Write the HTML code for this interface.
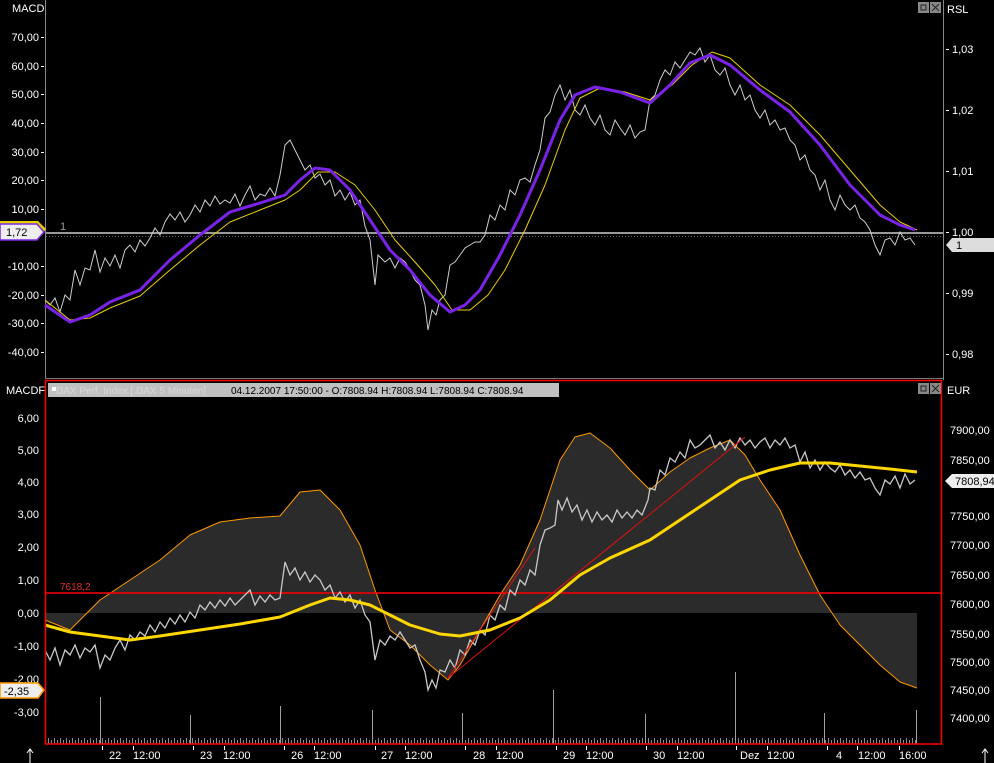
<!DOCTYPE html>
<html><head><meta charset="utf-8"><style>
html,body{margin:0;padding:0;background:#000;width:994px;height:763px;overflow:hidden}
svg{display:block}
text{font-family:"Liberation Sans",sans-serif;font-size:11px;fill:#fff}
</style></head><body>
<svg width="994" height="763" viewBox="0 0 994 763" xmlns="http://www.w3.org/2000/svg">
<defs>
<pattern id="vol" x="45" y="0" width="6" height="763" patternUnits="userSpaceOnUse">
<rect x="0" y="740" width="1" height="4" fill="#8a8a8a"/>
<rect x="3" y="738" width="1" height="6" fill="#8a8a8a"/>
</pattern>
</defs>
<line x1="45.5" y1="0" x2="45.5" y2="378" stroke="#888"/>
<line x1="943.5" y1="0" x2="943.5" y2="380" stroke="#888"/>
<line x1="45" y1="378.5" x2="943" y2="378.5" stroke="#777"/>
<text x="12" y="12">MACD</text>
<text x="947" y="13">RSL</text>
<rect x="918" y="2" width="11" height="11" fill="#888"/><rect x="921" y="5" width="5" height="5" fill="none" stroke="#222"/>
<rect x="930" y="2" width="11" height="11" fill="#888"/><path d="M932 4l7 7M939 4l-7 7" stroke="#222"/>
<g text-anchor="end">
<text x="39" y="41">70,00</text><text x="39" y="70">60,00</text><text x="39" y="98">50,00</text>
<text x="39" y="127">40,00</text><text x="39" y="156">30,00</text><text x="39" y="184">20,00</text>
<text x="39" y="213">10,00</text><text x="39" y="270">-10,00</text>
<text x="39" y="299">-20,00</text><text x="39" y="327">-30,00</text><text x="39" y="356">-40,00</text>
</g>
<g fill="#fff">
<rect x="41" y="37" width="3" height="1"/><rect x="41" y="66" width="3" height="1"/><rect x="41" y="94" width="3" height="1"/><rect x="41" y="123" width="3" height="1"/><rect x="41" y="152" width="3" height="1"/><rect x="41" y="180" width="3" height="1"/><rect x="41" y="209" width="3" height="1"/><rect x="41" y="266" width="3" height="1"/><rect x="41" y="295" width="3" height="1"/><rect x="41" y="323" width="3" height="1"/><rect x="41" y="352" width="3" height="1"/>
</g>
<g>
<text x="952" y="53">1,03</text><text x="952" y="114">1,02</text><text x="952" y="175">1,01</text>
<text x="952" y="236">1,00</text><text x="952" y="297">0,99</text><text x="952" y="358">0,98</text>
</g>
<g fill="#fff"><rect x="946" y="49" width="3" height="1"/><rect x="946" y="110" width="3" height="1"/><rect x="946" y="171" width="3" height="1"/><rect x="946" y="232" width="3" height="1"/><rect x="946" y="293" width="3" height="1"/><rect x="946" y="354" width="3" height="1"/></g>
<line x1="46" y1="233" x2="943" y2="233" stroke="#999" stroke-width="2"/>
<line x1="46" y1="236.5" x2="943" y2="236.5" stroke="#666" stroke-dasharray="1 2"/>
<text x="60" y="230" style="fill:#999">1</text>
<polyline fill="none" stroke="#ccc" stroke-width="1" points="45,300 50,305 55,298 60,312 65,295 70,300 75,270 80,285 85,268 90,270 95,250 100,272 105,258 110,266 115,255 120,268 125,250 130,245 135,252 140,240 145,246 150,238 155,228 160,235 165,222 170,214 175,220 180,212 185,222 190,215 195,205 200,212 205,200 210,206 215,196 220,204 225,200 230,203 235,194 240,206 245,195 250,186 255,200 260,194 265,196 270,188 275,196 280,175 285,145 290,140 295,150 300,160 305,170 310,165 315,178 320,174 325,185 330,180 335,196 340,190 345,200 350,192 355,205 360,200 365,226 370,240 375,285 378,255 385,262 390,258 395,268 400,258 405,262 410,270 415,280 420,285 425,305 428,330 432,310 436,315 440,300 445,295 450,265 455,262 460,255 465,248 470,245 475,242 480,242 485,235 490,215 495,220 500,205 505,210 510,190 515,195 520,180 525,178 530,182 535,165 540,150 545,118 550,112 555,95 560,85 565,100 570,90 575,110 580,115 585,105 590,118 595,125 600,115 605,130 610,135 615,120 620,128 625,135 630,125 635,138 640,132 645,130 650,100 655,95 660,80 665,70 670,75 675,62 680,68 685,60 690,52 695,55 700,48 705,62 710,55 715,70 720,75 725,68 730,85 735,95 740,85 745,100 750,95 755,110 760,118 765,110 770,125 775,120 780,130 785,128 790,140 795,145 800,160 805,155 810,170 815,175 820,190 825,180 830,200 835,210 840,195 845,205 850,210 855,205 860,218 865,222 870,230 875,245 880,255 885,240 890,238 895,245 900,232 905,240 910,238 915,245"/>
<polyline fill="none" stroke="#e8d000" stroke-width="1" stroke-linejoin="round" points="45,300 70,320 90,318 110,308 140,296 170,270 200,245 230,222 260,210 285,200 300,190 318,172 335,172 355,185 375,210 395,240 415,262 435,285 452,310 470,310 488,295 505,270 525,230 545,185 565,130 580,98 600,88 625,92 650,100 672,85 692,65 712,52 730,58 760,85 790,105 820,135 850,170 880,205 900,222 917,230"/>
<polyline fill="none" stroke="#7a22e8" stroke-width="3" stroke-linejoin="round" points="45,305 70,322 90,315 110,302 140,290 170,260 200,235 230,212 260,203 285,195 300,180 315,168 330,170 350,190 370,220 390,250 410,270 430,295 450,312 465,305 480,290 500,255 520,215 540,170 560,120 575,95 595,87 620,92 650,103 670,85 690,63 710,55 730,65 760,90 790,112 820,145 850,185 880,215 900,225 915,230"/>
<path d="M0,221 H38 L46,229 L38,240 H0Z" fill="#e8d000"/>
<path d="M0,224 H37 L44,232 L37,240 H0Z" fill="#eee" stroke="#7a2be2" stroke-width="1.5"/>
<text x="6" y="236" style="fill:#000">1,72</text>
<path d="M946,245 L952,238 H994 V252 H952Z" fill="#ddd"/>
<text x="956" y="249" style="fill:#000">1</text>

<polygon fill="#2b2b2b" points="45,613 45,620 70,630 100,600 130,580 160,560 190,535 220,522 250,518 280,516 300,492 320,490 340,510 360,545 375,590 390,630 410,645 430,665 448,680 460,665 480,630 500,595 520,565 540,520 560,460 575,437 590,433 610,448 630,470 650,490 670,472 690,458 710,448 730,440 745,455 760,480 780,510 800,555 820,595 840,625 860,645 880,665 900,682 917,688 917,613"/>
<polyline fill="none" stroke="#ff9900" stroke-width="1" stroke-linejoin="round" points="45,620 70,630 100,600 130,580 160,560 190,535 220,522 250,518 280,516 300,492 320,490 340,510 360,545 375,590 390,630 410,645 430,665 448,680 460,665 480,630 500,595 520,565 540,520 560,460 575,437 590,433 610,448 630,470 650,490 670,472 690,458 710,448 730,440 745,455 760,480 780,510 800,555 820,595 840,625 860,645 880,665 900,682 917,688"/>
<line x1="46" y1="593" x2="942" y2="593" stroke="#ff0000" stroke-width="1.5"/>
<text x="60" y="590" style="fill:#e03030;font-size:10px">7618,2</text>
<polyline fill="none" stroke="#c8c8c8" stroke-width="1.3" points="45,650 50,660 55,648 60,665 65,650 70,655 75,645 80,658 85,648 90,652 95,645 100,668 105,655 110,660 115,648 120,640 125,650 130,635 135,640 140,632 145,636 150,625 155,632 160,622 165,628 170,618 175,624 180,615 185,622 190,612 195,618 200,605 205,610 210,602 215,608 220,600 225,606 230,598 235,605 240,600 245,595 250,590 255,605 260,596 265,602 270,595 275,600 280,598 285,562 290,575 295,568 300,580 305,572 310,582 315,575 320,580 325,590 330,585 335,598 340,592 345,602 350,595 355,608 360,600 365,615 370,622 375,660 380,640 385,645 390,636 395,640 400,632 405,640 410,648 415,645 420,660 425,672 428,690 432,680 436,688 440,670 445,672 450,660 455,668 460,650 465,655 470,640 475,645 480,630 485,635 490,615 495,620 500,605 505,610 510,590 515,595 520,580 525,585 530,570 535,575 540,545 545,530 550,528 555,525 558,500 562,510 567,498 572,512 577,505 582,520 587,510 592,522 597,512 602,520 607,515 612,522 617,510 622,518 627,512 632,518 637,510 642,515 648,500 650,488 655,490 660,470 665,475 670,458 675,462 680,452 685,458 690,440 695,448 700,445 705,440 710,435 715,448 720,442 725,450 730,440 735,448 740,438 745,445 750,440 755,448 760,442 765,438 770,448 775,440 780,445 785,438 790,448 795,445 800,462 805,452 810,468 815,460 820,470 825,462 830,468 835,472 840,465 845,475 850,470 855,478 860,472 865,480 870,478 875,488 880,495 885,480 890,484 895,476 900,488 905,474 910,484 915,480"/>
<line x1="448" y1="678" x2="745" y2="437" stroke="#dd1010" stroke-width="1"/>
<line x1="448" y1="678" x2="535" y2="548" stroke="#dd1010" stroke-width="1"/>
<polyline fill="none" stroke="#ffd700" stroke-width="3" stroke-linejoin="round" points="45,625 70,632 100,636 130,640 160,636 200,630 240,624 280,617 310,605 330,598 350,600 370,605 390,615 410,625 440,634 460,636 490,630 520,618 550,600 580,575 610,558 650,540 680,520 710,500 740,480 770,470 800,463 830,463 860,466 890,469 917,472"/>
<rect x="46" y="735" width="872" height="9" fill="url(#vol)"/>
<g fill="#a0a0a0">
<rect x="100" y="697" width="1" height="47"/><rect x="190" y="715" width="1" height="29"/><rect x="280" y="706" width="1" height="38"/><rect x="372" y="710" width="1" height="34"/><rect x="462" y="713" width="1" height="31"/><rect x="553" y="690" width="1" height="54"/><rect x="645" y="714" width="1" height="30"/><rect x="735" y="672" width="1" height="72"/><rect x="824" y="713" width="1" height="31"/><rect x="916" y="710" width="1" height="34"/>
</g>
<rect x="45.5" y="380.5" width="896" height="363.5" fill="none" stroke="#ff0000" stroke-width="1.5"/>
<text x="6" y="394">MACDF</text>
<text x="947" y="394">EUR</text>
<rect x="48" y="383" width="511" height="14" fill="#c0c0c0"/>
<rect x="52" y="387" width="4" height="4" fill="#fff"/>
<text x="56" y="394" style="font-size:10px;fill:#d8d8d8">DAX Perf. Index [.DAX  5 Minuten]</text>
<text x="231" y="394" style="font-size:10px;fill:#000">04.12.2007 17:50:00 - O:7808.94 H:7808.94 L:7808.94 C:7808.94</text>
<rect x="918" y="383" width="11" height="11" fill="#888"/><rect x="921" y="386" width="5" height="5" fill="none" stroke="#222"/>
<rect x="930" y="383" width="11" height="11" fill="#888"/><path d="M932 385l7 7M939 385l-7 7" stroke="#222"/>
<g text-anchor="end">
<text x="39" y="422">6,00</text><text x="39" y="454">5,00</text><text x="39" y="486">4,00</text>
<text x="39" y="518">3,00</text><text x="39" y="551">2,00</text><text x="39" y="584">1,00</text>
<text x="39" y="617">0,00</text><text x="39" y="650">-1,00</text><text x="39" y="683">-2,00</text><text x="39" y="716">-3,00</text>
</g>
<g>
<text x="950" y="434">7900,00</text><text x="950" y="464">7850,00</text><text x="950" y="520">7750,00</text>
<text x="950" y="549">7700,00</text><text x="950" y="579">7650,00</text><text x="950" y="608">7600,00</text>
<text x="950" y="638">7550,00</text><text x="950" y="666">7500,00</text><text x="950" y="694">7450,00</text><text x="950" y="722">7400,00</text>
</g>
<path d="M0,683 H38 L44,690 L38,698 H0Z" fill="#eee" stroke="#ff9900" stroke-width="1.5"/>
<text x="4" y="695" style="fill:#000">-2,35</text>
<path d="M945,481 L952,474 H994 V488 H952Z" fill="#eee"/>
<text x="955" y="485" style="fill:#000">7808,94</text>
<g>
<text x="109" y="759">22</text><text x="133" y="759">12:00</text>
<text x="200" y="759">23</text><text x="223" y="759">12:00</text>
<text x="291" y="759">26</text><text x="314" y="759">12:00</text>
<text x="381" y="759">27</text><text x="405" y="759">12:00</text>
<text x="473" y="759">28</text><text x="496" y="759">12:00</text>
<text x="563" y="759">29</text><text x="586" y="759">12:00</text>
<text x="653" y="759">30</text><text x="677" y="759">12:00</text>
<text x="740" y="759">Dez</text><text x="767" y="759">12:00</text>
<text x="836" y="759">4</text><text x="858" y="759">12:00</text><text x="899" y="759">16:00</text>
</g>
<g fill="#fff">
<rect x="102" y="746" width="1" height="4"/><rect x="133" y="746" width="1" height="4"/><rect x="193" y="746" width="1" height="4"/><rect x="224" y="746" width="1" height="4"/><rect x="284" y="746" width="1" height="4"/><rect x="314" y="746" width="1" height="4"/><rect x="375" y="746" width="1" height="4"/><rect x="405" y="746" width="1" height="4"/><rect x="465" y="746" width="1" height="4"/><rect x="496" y="746" width="1" height="4"/><rect x="556" y="746" width="1" height="4"/><rect x="586" y="746" width="1" height="4"/><rect x="646" y="746" width="1" height="4"/><rect x="677" y="746" width="1" height="4"/><rect x="736" y="746" width="1" height="4"/><rect x="767" y="746" width="1" height="4"/><rect x="827" y="746" width="1" height="4"/><rect x="857" y="746" width="1" height="4"/><rect x="899" y="746" width="1" height="4"/>
</g>
<path d="M30,763 V750 M27,753 L30,749 L33,753" stroke="#fff" fill="none"/>
<path d="M985,763 V750 M982,753 L985,749 L988,753" stroke="#fff" fill="none"/>
</svg>
</body></html>
